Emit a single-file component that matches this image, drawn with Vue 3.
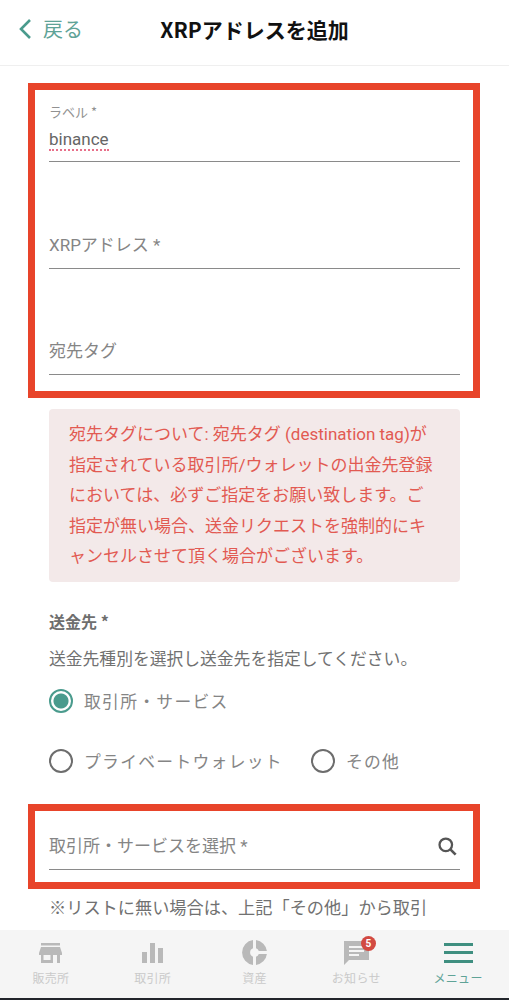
<script setup>
const tabs = [
  { label: '販売所', icon: 'store' },
  { label: '取引所', icon: 'bars' },
  { label: '資産', icon: 'pie' },
  { label: 'お知らせ', icon: 'chat', badge: 5 },
  { label: 'メニュー', icon: 'menu', active: true },
]
</script>

<template>
  <div class="page">
    <header class="top">
      <div class="back">
        <svg width="14" height="22" viewBox="0 0 14 22"><path d="M12 2 L3 11 L12 20" fill="none" stroke="#4a9b8d" stroke-width="2.6"/></svg>
        <span>戻る</span>
      </div>
      <h1>XRPアドレスを追加</h1>
    </header>

    <main class="body">
      <section class="mark first">
        <div class="field filled">
          <div class="small">ラベル *</div>
          <div class="value"><span class="spell">binance</span></div>
        </div>
        <div class="field addr"><div class="ph">XRPアドレス *</div></div>
        <div class="field tag"><div class="ph">宛先タグ</div></div>
      </section>

      <div class="alert">宛先タグについて: 宛先タグ (destination tag)が指定されている取引所/ウォレットの出金先登録においては、必ずご指定をお願い致します。ご指定が無い場合、送金リクエストを強制的にキャンセルさせて頂く場合がございます。</div>

      <div class="dest">
        <div class="dest-title">送金先 *</div>
        <div class="dest-hint">送金先種別を選択し送金先を指定してください。</div>
        <div class="radio-row">
          <div class="radio on"><i></i><span>取引所・サービス</span></div>
        </div>
        <div class="radio-row">
          <div class="radio"><i></i><span>プライベートウォレット</span></div>
          <div class="radio"><i></i><span>その他</span></div>
        </div>
      </div>

      <section class="mark second">
        <div class="field select">
          <div class="ph">取引所・サービスを選択 *</div>
          <svg width="19" height="19" viewBox="0 0 20 20"><circle cx="8.2" cy="8.2" r="6.6" fill="none" stroke="#555" stroke-width="2.4"/><path d="M13 13 L18.6 18.6" stroke="#555" stroke-width="2.8"/></svg>
        </div>
      </section>

      <p class="note">※リストに無い場合は、上記「その他」から取引所名等を直接入力してください。</p>
    </main>

    <nav class="tabs">
      <div v-for="t in tabs" :key="t.label" class="tab" :class="{ active: t.active }">
        <div class="ico">
          <svg v-if="t.icon === 'store'" width="23" height="20" viewBox="0 0 23 20" fill="#b9b9b9">
            <rect x="2" y="0" width="19" height="2.5"/>
            <path d="M2 4 H21 L23 10 V12 H21 V20 H18 V12 H14 V20 H2 V12 H0 V10 Z M4.5 12 V17 H11.5 V12 Z" fill-rule="evenodd"/>
          </svg>
          <svg v-else-if="t.icon === 'bars'" width="21" height="20" viewBox="0 0 21 20" fill="#b9b9b9">
            <rect x="0" y="9" width="5" height="11"/>
            <rect x="8" y="0" width="5" height="20"/>
            <rect x="16" y="5" width="5" height="15"/>
          </svg>
          <svg v-else-if="t.icon === 'pie'" width="25" height="25" viewBox="0 0 25 25" fill="#b9b9b9">
            <path d="M11 0.1 V8.3 A4.5 4.5 0 0 0 11 16.7 V24.9 A12.5 12.5 0 0 1 11 0.1 Z"/>
            <path d="M14 0.1 A12.5 12.5 0 0 1 24.9 11 H16.8 A4.5 4.5 0 0 0 14 8.3 Z"/>
            <path d="M24.9 14 A12.5 12.5 0 0 1 14 24.9 V16.7 A4.5 4.5 0 0 0 16.8 14 Z"/>
          </svg>
          <svg v-else-if="t.icon === 'chat'" width="25" height="24" viewBox="0 0 25 24">
            <path d="M0 0 H25 V19 H5 L0 24 Z" fill="#b9b9b9"/>
            <path d="M5 6 H20 M5 10 H20 M5 14 H15" stroke="#f5f5f5" stroke-width="2"/>
          </svg>
          <svg v-else width="29" height="20" viewBox="0 0 29 20" fill="#3f8f80">
            <rect width="29" height="3"/>
            <rect y="8" width="29" height="3"/>
            <rect y="17" width="29" height="3"/>
          </svg>
          <b v-if="t.badge" class="badge">{{ t.badge }}</b>
        </div>
        <span class="tab-label">{{ t.label }}</span>
      </div>
    </nav>
  </div>
</template>

<style>
html, body { margin: 0; background: #fff; overflow: hidden; }
</style>

<style scoped>
.page {
  width: 509px;
  height: 1000px;
  display: flex;
  flex-direction: column;
  overflow: hidden;
  background: #fff;
  border-bottom: 2px solid #22252b;
  box-sizing: border-box;
  font-family: "Noto Sans CJK JP", "Liberation Sans", sans-serif;
}
.top {
  height: 66px;
  flex: none;
  box-sizing: border-box;
  border-bottom: 1px solid #efefef;
  padding-bottom: 6px;
  position: relative;
  display: flex;
  align-items: center;
  justify-content: center;
}
.top h1 {
  margin: 0;
  font-size: 21px;
  font-weight: 700;
  color: #111;
  line-height: 1;
}
.back {
  position: absolute;
  left: 18px;
  top: 18px;
  display: flex;
  align-items: center;
  gap: 11px;
  color: #5fa397;
  font-size: 20px;
  line-height: 22px;
}
.body { flex: 1; min-height: 0; overflow: hidden; padding: 17px 29px 0 28px; }
.mark { border: 7px solid #e8442a; }
.first { height: 315px; box-sizing: border-box; padding: 0 13px 0 14px; }
.field {
  box-sizing: border-box;
  border-bottom: 1px solid #8a8a8a;
  position: relative;
}
.field.filled { height: 72px; }
.field.addr { height: 107px; }
.field.tag { height: 106px; }
.small { position: absolute; left: 0; top: 14px; font-size: 13px; line-height: 16px; color: #919191; }
.value { position: absolute; left: 0; top: 37px; font-size: 17px; line-height: 24px; color: #666; font-family: Roboto, sans-serif; }
.spell { border-bottom: 2px dotted #e8708a; display: inline-block; line-height: 19px; }
.ph { position: absolute; left: 0; bottom: 11px; font-size: 17px; line-height: 24px; color: #858585; white-space: nowrap; font-family: Roboto, "Noto Sans CJK JP", sans-serif; }
.alert {
  margin: 11px 20px 0 21px;
  height: 173px;
  box-sizing: border-box;
  background: #f3e9e9;
  border-radius: 4px;
  padding: 10px 24px 0 20px;
  font-size: 17px;
  line-height: 30.5px;
  color: #e25a52;
  font-family: Roboto, "Noto Sans CJK JP", sans-serif;
}
.dest { margin-left: 21px; padding-top: 27px; height: 222px; box-sizing: border-box; }
.dest-title { font-size: 16px; line-height: 24px; font-weight: 700; color: #6e6e6e; }
.dest-hint { margin-top: 13px; font-size: 16.8px; line-height: 24px; color: #717171; white-space: nowrap; }
.radio-row { display: flex; gap: 28px; height: 60px; align-items: flex-start; padding-top: 19px; box-sizing: border-box; }
.radio { display: flex; align-items: center; gap: 11px; font-size: 16.8px; line-height: 24px; letter-spacing: 1.3px; color: #858585; }
.radio i {
  width: 24px;
  height: 24px;
  box-sizing: border-box;
  border: 2.5px solid #6d6d6d;
  border-radius: 50%;
  display: block;
}
.radio.on i { border-color: #4a9b8d; background: radial-gradient(circle, #4a9b8d 0 7px, #fff 8px); }
.second { height: 85px; box-sizing: border-box; padding: 0 13px 0 14px; }
.select { height: 59px; }
.select svg { position: absolute; right: 3px; top: 26px; }
.note { margin: 2px 0 0 21px; width: 385px; font-size: 17.2px; line-height: 31px; color: #717171; }
.tabs {
  height: 68px;
  flex: none;
  background: #f5f5f5;
  display: flex;
  position: relative;
}
.tab { flex: 1; display: flex; flex-direction: column; align-items: center; padding-top: 8px; }
.ico { height: 29px; display: flex; align-items: center; justify-content: center; position: relative; }
.tab-label { font-size: 12px; line-height: 16px; margin-top: 3px; color: #cacaca; letter-spacing: 0.3px; }
.active .tab-label { color: #5fa397; }
.badge {
  position: absolute;
  right: -7px;
  top: -2px;
  width: 15px;
  height: 15px;
  border-radius: 50%;
  background: #d24a42;
  color: #fff;
  font-size: 10px;
  line-height: 15px;
  text-align: center;
  font-family: Roboto, sans-serif;
}
</style>
